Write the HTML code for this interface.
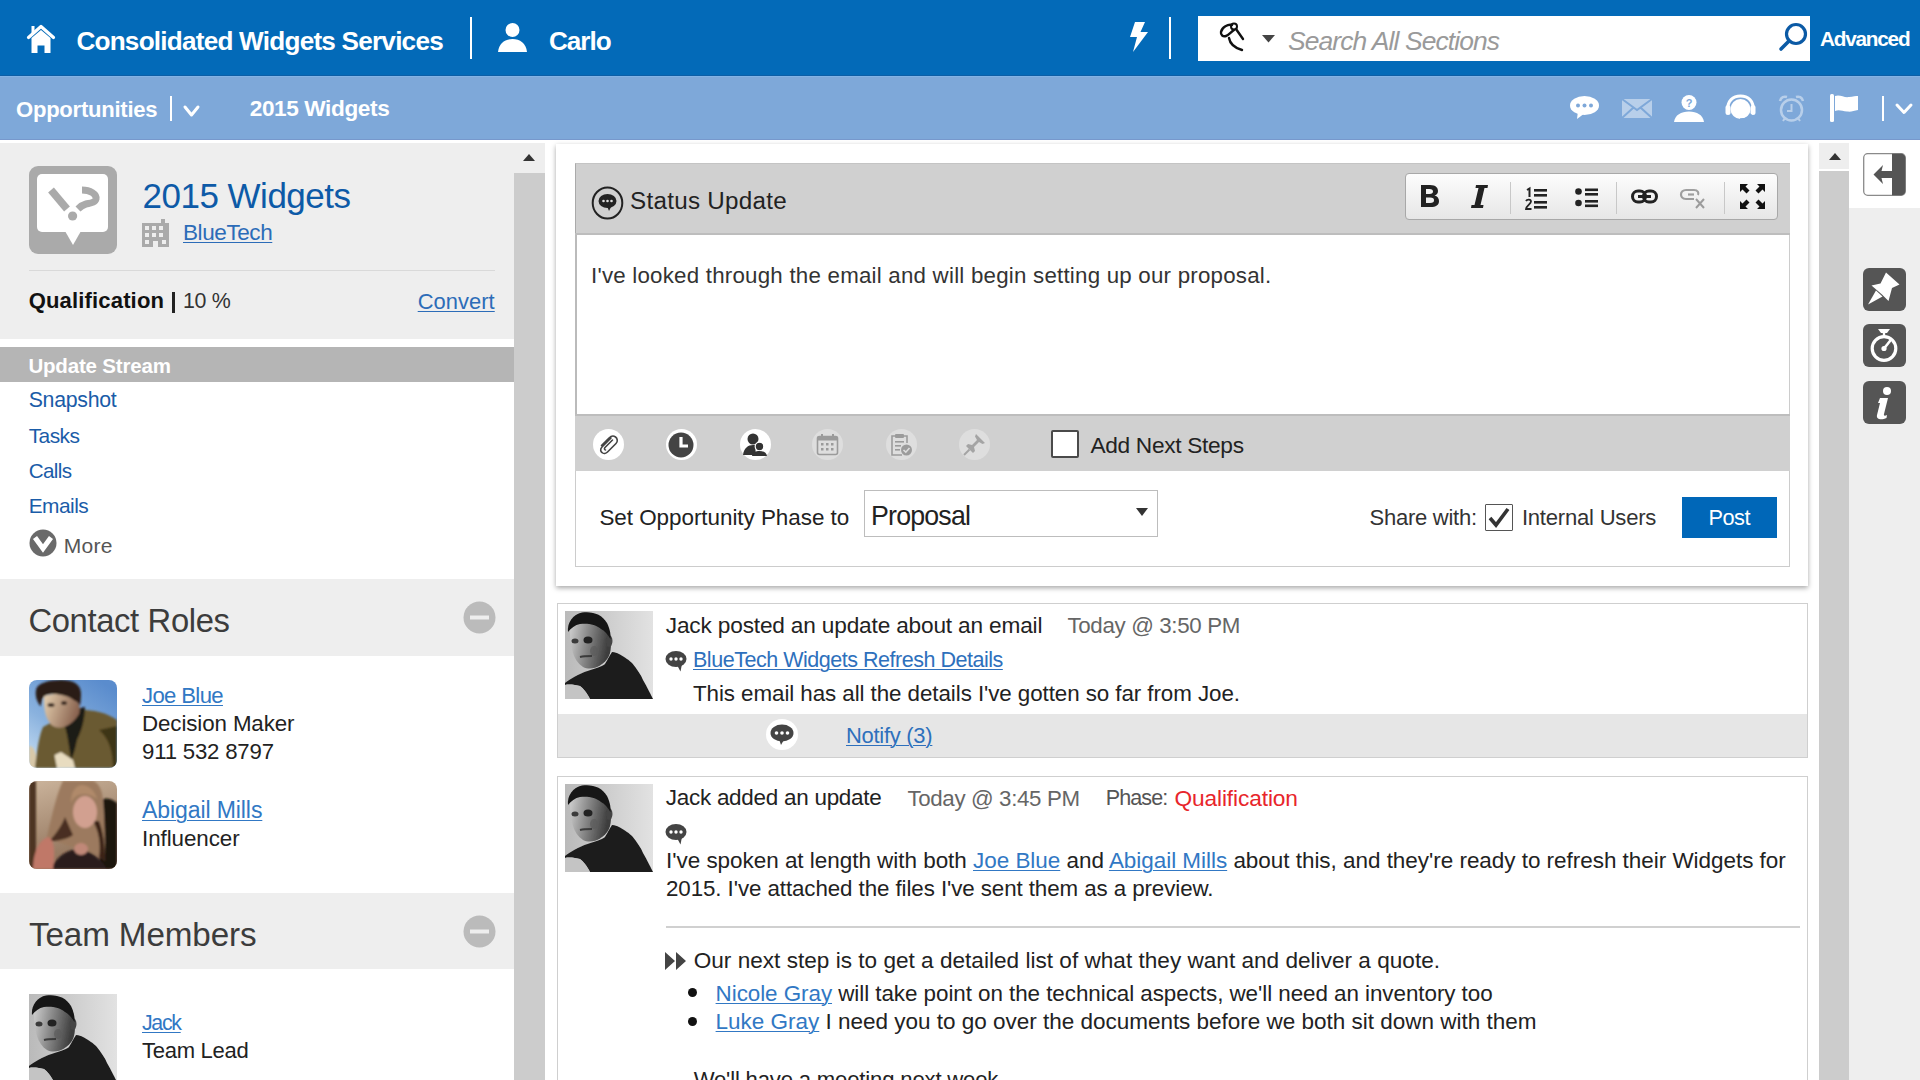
<!DOCTYPE html>
<html><head><meta charset="utf-8">
<style>
*{box-sizing:border-box}
html,body{margin:0;padding:0}
body{width:1920px;height:1080px;overflow:hidden;position:relative;font-family:"Liberation Sans",sans-serif;background:#fff;color:#222}
.a{position:absolute}
svg.a{overflow:visible}
.t{position:absolute;line-height:1;white-space:nowrap}
.lk{text-decoration:underline;text-decoration-thickness:1px;text-underline-offset:2px}
.circ{position:absolute;width:31px;height:31px;border-radius:50%}
</style></head><body>
<!-- ============ TOP HEADER ============ -->
<div class="a" style="left:0;top:0;width:1920px;height:76px;background:#036ab8"></div>
<div class="a" style="left:0;top:76px;width:1920px;height:64px;background:#7ea8d9"></div>
<div class="a" style="left:0;top:140px;width:1920px;height:3px;background:#fff"></div>
<div class="a" style="left:0;top:75px;width:1920px;height:1px;background:#0d5ea6"></div>
<div class="a" style="left:0;top:76px;width:1920px;height:1px;background:#82b3e6"></div>
<div class="a" style="left:0;top:139px;width:1920px;height:1px;background:#7798cc"></div>
<!-- home -->
<svg class="a" style="left:27px;top:24px" width="28" height="29" viewBox="0 0 28 29">
 <path d="M1.5 13.5 L14 2.5 L26.5 13.5" stroke="#fff" stroke-width="3.2" fill="none" stroke-linecap="round" stroke-linejoin="round"/>
 <path d="M4.5 14 L14 6 L23.5 14 V29 H17.5 V21.5 H10.5 V29 H4.5 Z" fill="#fff"/>
 <rect x="4.5" y="2" width="3" height="7" fill="#fff"/>
</svg>
<div class="a" style="left:470px;top:17px;width:2px;height:42px;background:#fff"></div>
<!-- person -->
<svg class="a" style="left:498px;top:23px" width="30" height="30" viewBox="0 0 30 30">
 <circle cx="14.5" cy="7" r="7" fill="#fff"/>
 <path d="M0 29 C1 20 7 16 14.5 16 C22 16 28 20 29 29 Z" fill="#fff"/>
</svg>
<!-- lightning -->
<svg class="a" style="left:1129px;top:22px" width="20" height="30" viewBox="0 0 20 30">
 <path d="M6 0 H16 L11.5 10 H19 L4 30 L8 15 H1 Z" fill="#fff"/>
</svg>
<div class="a" style="left:1169px;top:17px;width:2px;height:42px;background:#fff"></div>
<!-- search box -->
<div class="a" style="left:1198px;top:16px;width:612px;height:45px;background:#fff"></div>
<svg class="a" style="left:1219px;top:21px" width="30" height="30" viewBox="0 0 30 30">
 <path d="M13 4 C9 3 3 6 2 11 C1.5 14 4 16 7 15 C10 14 12 11 15 9" stroke="#111" stroke-width="2.4" fill="none" stroke-linecap="round"/>
 <circle cx="15" cy="5.5" r="3" stroke="#111" stroke-width="2" fill="none"/>
 <path d="M17 8 L24 18" stroke="#111" stroke-width="2.4" stroke-linecap="round"/>
 <path d="M10 17 C11 23 16 27 23 29" stroke="#111" stroke-width="2.4" fill="none" stroke-linecap="round"/>
</svg>
<svg class="a" style="left:1262px;top:35px" width="13" height="8" viewBox="0 0 13 8"><path d="M0 0 H13 L6.5 7.5 Z" fill="#444"/></svg>
<svg class="a" style="left:1778px;top:22px" width="30" height="30" viewBox="0 0 30 30">
 <circle cx="18" cy="12" r="9.5" stroke="#0b5aa5" stroke-width="3.2" fill="none"/>
 <path d="M11 19 L3 27" stroke="#0b5aa5" stroke-width="3.6" stroke-linecap="round"/>
</svg>
<!-- sub header -->
<div class="a" style="left:170px;top:96px;width:2px;height:25px;background:#fff"></div>
<svg class="a" style="left:183px;top:105px" width="17" height="13" viewBox="0 0 17 13"><path d="M2 2 L8.5 10 L15 2" stroke="#fff" stroke-width="3" fill="none" stroke-linecap="round" stroke-linejoin="round"/></svg>
<!-- chat -->
<svg class="a" style="left:1570px;top:96px" width="30" height="24" viewBox="0 0 30 24">
 <ellipse cx="14.5" cy="9.5" rx="14.5" ry="9.5" fill="#fff"/>
 <path d="M8 15 L7 23 L15 17 Z" fill="#fff"/>
 <circle cx="8" cy="9.5" r="2" fill="#7ea8d9"/><circle cx="14.5" cy="9.5" r="2" fill="#7ea8d9"/><circle cx="21" cy="9.5" r="2" fill="#7ea8d9"/>
</svg>
<!-- envelope faded -->
<svg class="a" style="left:1622px;top:99px" width="30" height="19" viewBox="0 0 30 19" opacity="0.45">
 <path d="M0 0 H30 V19 H0 Z" fill="#fff"/>
 <path d="M0 0 L15 11 L30 0 M0 19 L11 9 M30 19 L19 9" stroke="#7ea8d9" stroke-width="2" fill="none"/>
</svg>
<!-- person ? -->
<svg class="a" style="left:1674px;top:95px" width="30" height="28" viewBox="0 0 30 28">
 <circle cx="15" cy="7.5" r="7.5" fill="#fff"/>
 <text x="15" y="11.5" font-size="11" font-weight="bold" text-anchor="middle" fill="#7ea8d9" font-family="Liberation Sans">?</text>
 <path d="M0 27 C1 20 7 16.5 15 16.5 C23 16.5 29 20 30 27 Z" fill="#fff"/>
</svg>
<!-- headset -->
<svg class="a" style="left:1725px;top:94px" width="31" height="27" viewBox="0 0 31 27">
 <path d="M3 16 C2 7 8 2 15.5 2 C23 2 29 7 28 16" stroke="#fff" stroke-width="3" fill="none"/>
 <circle cx="15.5" cy="15" r="10" fill="#fff"/>
 <rect x="0.5" y="11" width="5" height="10" rx="2.5" fill="#fff"/>
 <rect x="25.5" y="11" width="5" height="10" rx="2.5" fill="#fff"/>
 <path d="M26 20 C25 24 20 25 15 25" stroke="#7ea8d9" stroke-width="1.5" fill="none"/>
</svg>
<!-- alarm faded -->
<svg class="a" style="left:1778px;top:95px" width="27" height="28" viewBox="0 0 27 28" opacity="0.45">
 <circle cx="13.5" cy="15" r="10.5" stroke="#fff" stroke-width="2.5" fill="none"/>
 <path d="M2 6 C3 2 6 1 9 2 M25 6 C24 2 21 1 18 2" stroke="#fff" stroke-width="2.5" fill="none"/>
 <path d="M13.5 9 V16 H9" stroke="#fff" stroke-width="2" fill="none"/>
 <path d="M5 26 L7 23 M22 26 L20 23" stroke="#fff" stroke-width="2"/>
</svg>
<!-- flag -->
<svg class="a" style="left:1830px;top:94px" width="29" height="29" viewBox="0 0 29 29">
 <rect x="0" y="0" width="4" height="28" rx="1.5" fill="#fff"/>
 <path d="M5 2 C10 0 14 4 19 3 C23 2.5 26 2 28 2 V16 C24 17 21 18 17 17.5 C12 17 9 15 5 17 Z" fill="#fff"/>
</svg>
<div class="a" style="left:1882px;top:96px;width:2px;height:25px;background:#fff"></div>
<svg class="a" style="left:1895px;top:103px" width="18" height="12" viewBox="0 0 18 12"><path d="M2 2 L9 9.5 L16 2" stroke="#fff" stroke-width="3" fill="none" stroke-linecap="round" stroke-linejoin="round"/></svg>

<!-- ============ LEFT PANEL ============ -->
<div class="a" style="left:0;top:143px;width:514px;height:196px;background:#eee"></div>
<div class="a" style="left:0;top:347px;width:514px;height:35px;background:#b5b5b5"></div>
<div class="a" style="left:0;top:579px;width:514px;height:77px;background:#eee"></div>
<div class="a" style="left:0;top:893px;width:514px;height:76px;background:#eee"></div>
<!-- big icon -->
<svg class="a" style="left:29px;top:166px" width="88" height="88" viewBox="0 0 88 88">
 <rect x="0" y="0" width="88" height="88" rx="9" fill="#aaa"/>
 <rect x="8" y="8" width="71" height="58" rx="5" fill="#fff"/>
 <path d="M36 65 L44 79 L52 65 Z" fill="#fff"/>
 <path d="M22 24 L38 43" stroke="#aaa" stroke-width="7.5" stroke-linecap="butt"/>
 <circle cx="43.6" cy="50" r="4.6" fill="#aaa"/>
 <path d="M53 24 C61 24 68 28 67 33 C66 37 61 37 57 38 C53 39 51 41 49 43" stroke="#aaa" stroke-width="7" fill="none"/>
</svg>
<!-- building -->
<svg class="a" style="left:142px;top:219px" width="28" height="28" viewBox="0 0 28 28">
 <path d="M0 4 H19 V0 H23 V4 H27 V28 H16 V22 H11 V28 H0 Z" fill="#aaa"/>
 <g fill="#eee">
 <rect x="3" y="7" width="4" height="4"/><rect x="10" y="7" width="4" height="4"/><rect x="17" y="7" width="4" height="4"/>
 <rect x="3" y="14" width="4" height="4"/><rect x="10" y="14" width="4" height="4"/><rect x="17" y="14" width="4" height="4"/>
 <rect x="3" y="21" width="4" height="4"/><rect x="20" y="21" width="4" height="4"/>
 </g>
</svg>
<div class="a" style="left:29px;top:270px;width:466px;height:1px;background:#d9d9d9"></div>
<div class="a" style="left:172px;top:292px;width:2.5px;height:21px;background:#222"></div>
<!-- more circle -->
<svg class="a" style="left:29px;top:529px" width="28" height="28" viewBox="0 0 28 28">
 <circle cx="14" cy="14" r="13.5" fill="#6a6a6a"/>
 <path d="M6 8.5 L14 19.5 L22 8.5" stroke="#fff" stroke-width="5" fill="none" stroke-linejoin="miter"/>
</svg>
<!-- minus circles -->
<svg class="a" style="left:463px;top:601px" width="33" height="33" viewBox="0 0 33 33"><circle cx="16.5" cy="16.5" r="16" fill="#bbb"/><rect x="7" y="14.5" width="19" height="4" fill="#eee"/></svg>
<svg class="a" style="left:463px;top:915px" width="33" height="33" viewBox="0 0 33 33"><circle cx="16.5" cy="16.5" r="16" fill="#bbb"/><rect x="7" y="14.5" width="19" height="4" fill="#eee"/></svg>
<!-- photos -->
<svg class="a" style="left:29px;top:680px" width="88" height="88" viewBox="0 0 88 88">
 <defs><clipPath id="cj"><rect width="88" height="88" rx="8"/></clipPath>
 <linearGradient id="sky" x1="0.8" y1="0" x2="0.1" y2="1"><stop offset="0" stop-color="#5a8ccd"/><stop offset="0.6" stop-color="#8ab2de"/><stop offset="1" stop-color="#c4dcf2"/></linearGradient>
 <linearGradient id="jfc" x1="0" y1="0" x2="1" y2="0.3"><stop offset="0" stop-color="#e6d0b0"/><stop offset="1" stop-color="#8a6450"/></linearGradient>
 <filter id="bj"><feGaussianBlur stdDeviation="0.8"/></filter></defs>
 <g clip-path="url(#cj)">
 <rect width="88" height="88" fill="url(#sky)"/>
 <g filter="url(#bj)">
 <path d="M0 66 C4 66 8 70 8 88 H0 Z" fill="#d8c8a8"/>
 <path d="M6 88 C8 70 10 56 14 47 C26 40 40 33 52 30 C64 30 76 32 88 40 V88 Z" fill="#6a5a30"/>
 <path d="M70 50 C80 58 84 72 84 88 H88 V46 Z" fill="#3e3418"/>
 <path d="M36 32 C44 30 50 28 56 27 C56 40 52 52 48 60 C46 70 44 76 42 80 C40 66 38 50 34 42 Z" fill="#1e1a14"/>
 <path d="M15 16 C14 30 18 44 26 47 C34 50 44 44 50 34 C52 28 50 22 46 20 C38 14 26 12 15 16 Z" fill="url(#jfc)"/>
 <path d="M7 10 C8 3 20 0 32 0 C44 0 52 4 52 14 C52 20 51 24 51 26 C49 22 47 21 46 21 C40 16 32 14 24 14 C18 14 14 16 13 20 C12 24 12 26 11.6 26 C8 22 6 16 7 10 Z" fill="#2a1c14"/>
 <ellipse cx="22" cy="25" rx="3.5" ry="2" fill="#3a2a20"/><ellipse cx="35" cy="23" rx="3" ry="2" fill="#3a2a20"/>
 <path d="M25.5 75 L32 72 L44 80 L46 88 H28 Z" fill="#e8dcc0"/>
 </g></g>
</svg>
<svg class="a" style="left:29px;top:781px" width="88" height="88" viewBox="0 0 88 88">
 <defs><clipPath id="ca"><rect width="88" height="88" rx="8"/></clipPath>
 <linearGradient id="wall" x1="0" y1="0" x2="0.3" y2="1"><stop offset="0" stop-color="#cbb49c"/><stop offset="1" stop-color="#8e7058"/></linearGradient>
 <filter id="ba"><feGaussianBlur stdDeviation="0.9"/></filter></defs>
 <g clip-path="url(#ca)">
 <rect width="88" height="88" fill="url(#wall)"/>
 <g filter="url(#ba)">
 <rect x="0" y="0" width="7" height="88" fill="#4e3424"/>
 <path d="M74 18 C80 16 86 20 88 22 V88 H68 C74 70 76 50 74 18 Z" fill="#1e130e"/>
 <path d="M34 0 C28 12 24 30 18 56 C28 62 40 64 50 68 C62 70 70 74 76 80 C76 60 76 40 74 22 C74 10 70 2 64 0 Z" fill="#9c7a5e"/>
 <path d="M36 36 C32 46 26 54 20 60 C30 60 38 58 44 54 Z" fill="#4a2e20"/>
 <path d="M64 40 C70 50 72 64 70 76 L76 80 C76 64 74 50 70 40 Z" fill="#3a2418"/>
 <ellipse cx="56" cy="31" rx="12" ry="16" fill="#d2a090"/>
 <path d="M42 22 C46 12 58 10 68 18 C66 10 60 4 52 4 C44 6 42 14 42 22 Z" fill="#b08a6a"/>
 <path d="M22 88 C28 74 40 68 50 68 C62 70 72 78 78 88 Z" fill="#2a1c1c"/>
 <ellipse cx="52" cy="68" rx="7" ry="6" fill="#c08878"/>
 <path d="M4 88 C4 72 10 58 20 56 C26 60 26 74 24 88 Z" fill="#c07868"/>
 </g></g>
</svg>
<svg class="a" style="left:29px;top:994px" width="88" height="88" viewBox="0 0 88 88">
 <defs><linearGradient id="jbt" x1="0" y1="0" x2="1" y2="0"><stop offset="0" stop-color="#bababa"/><stop offset="1" stop-color="#e2e2e2"/></linearGradient>
 <linearGradient id="jft" x1="0" y1="0" x2="1" y2="0.2"><stop offset="0" stop-color="#d0d0d0"/><stop offset="0.45" stop-color="#8c8c8c"/><stop offset="1" stop-color="#3c3c3c"/></linearGradient>
 <filter id="jblt"><feGaussianBlur stdDeviation="0.6"/></filter></defs>
 <rect width="88" height="88" fill="url(#jbt)"/>
 <g filter="url(#jblt)">
 <path d="M5 19 C5 35 8 50 18 56 C26 60 38 56 44 45 C47 38 46 28 44 22 C40 14 30 10 20 11 C12 12 6 15 5 19 Z" fill="url(#jft)"/>
 <ellipse cx="44" cy="30" rx="3.5" ry="6" fill="#444"/>
 <path d="M3 21 C2 12 8 3 17 1.5 C27 0 37 3 42 12 C45 18 46 24 45.5 28 C43 24 40 20 36 18 C31 13 22 12 15 13 C10 14 6 17 3 21 Z" fill="#141414"/>
 <ellipse cx="10" cy="30" rx="3.5" ry="2.5" fill="#3a3a3a"/><ellipse cx="23" cy="29" rx="4.5" ry="3.5" fill="#222"/><ellipse cx="29" cy="40" rx="4" ry="5" fill="#5a5a5a" opacity="0.6"/>
 <path d="M15 46 C19 45 23 45 27 45" stroke="#3a3a3a" stroke-width="2" fill="none"/>
 <path d="M0 72 C8 66 18 61 25.5 59 C32 57 38 55 40 53 C43 48 45 44 47 41 C50 41 52 42 54 43 C60 46 65 50 67 52 C72 58 76 64 78 69 C82 76 85 82 88 88 H25 C22 82 18 77 15 75 C10 74 4 73 0 74 Z" fill="#1c1c1c"/>
 <path d="M0 74 C5 73 11 74 15 75 C18 77 22 82 25 88 H0 Z" fill="#c4c4c4"/>
 </g>
</svg>
<!-- left scrollbar -->
<div class="a" style="left:514px;top:143px;width:31px;height:30px;background:#eee"></div>
<div class="a" style="left:514px;top:173px;width:31px;height:907px;background:#ccc"></div>
<svg class="a" style="left:523px;top:154px" width="12" height="7" viewBox="0 0 12 7"><path d="M0 7 L6 0 L12 7 Z" fill="#333"/></svg>

<!-- ============ MAIN ============ -->
<!-- status card -->
<div class="a" style="left:556px;top:144px;width:1252px;height:442px;background:#fff;box-shadow:0 2px 5px rgba(0,0,0,0.35)"></div>
<div class="a" style="left:575px;top:163px;width:1215px;height:71px;background:#d0d0d0;border-left:1px solid #aaa;border-top:1px solid #c4c4c4"></div>
<div class="a" style="left:575px;top:233px;width:1215px;height:2px;background:#bdbdbd"></div>
<div class="a" style="left:575px;top:235px;width:1215px;height:180px;background:#fff;border-left:2px solid #bbb;border-right:1px solid #ccc"></div>
<div class="a" style="left:575px;top:414px;width:1215px;height:57px;background:#d0d0d0;border-top:2px solid #bdbdbd"></div>
<div class="a" style="left:575px;top:471px;width:1215px;height:96px;background:#fff;border:1px solid #ccc;border-top:none"></div>
<!-- status icon -->
<svg class="a" style="left:591px;top:186px" width="33" height="34" viewBox="0 0 33 34">
 <ellipse cx="16.5" cy="17" rx="14.8" ry="15.5" stroke="#222" stroke-width="2" fill="none"/>
 <ellipse cx="16.5" cy="15" rx="9" ry="7" fill="#222"/>
 <path d="M16 20 L18 25 L21 19 Z" fill="#222"/>
 <circle cx="12.5" cy="15" r="1.3" fill="#ddd"/><circle cx="16.5" cy="15" r="1.3" fill="#ddd"/><circle cx="20.5" cy="15" r="1.3" fill="#ddd"/>
</svg>
<!-- editor toolbar -->
<div class="a" style="left:1405px;top:173px;width:373px;height:47px;border:1px solid #a8a8a8;border-radius:4px;background:linear-gradient(#fdfdfd,#e6e6e6)"></div>
<div class="a" style="left:1510px;top:182px;width:1px;height:32px;background:#c8c8c8"></div>
<div class="a" style="left:1616px;top:182px;width:1px;height:32px;background:#c8c8c8"></div>
<div class="a" style="left:1724px;top:182px;width:1px;height:32px;background:#c8c8c8"></div>
<svg class="a" style="left:1420px;top:184px" width="20" height="24" viewBox="0 0 20 24">
 <path d="M1 1 H10 C16 1 18 4 18 7 C18 9.5 16.5 11 14.5 11.5 C17.5 12 19 14.5 19 17 C19 21 16 23 10.5 23 H1 Z M6 5 V10 H9.5 C12 10 13 9 13 7.5 C13 6 12 5 9.5 5 Z M6 13.5 V19 H10 C13 19 14 18 14 16.2 C14 14.5 13 13.5 10 13.5 Z" fill="#222" fill-rule="evenodd"/>
</svg>
<svg class="a" style="left:1471px;top:185px" width="17" height="23" viewBox="0 0 17 23">
 <path d="M5 0 H17 L16.5 3 H13.5 L9.5 20 H12.5 L12 23 H0 L0.5 20 H3.5 L7.5 3 H4.5 Z" fill="#222"/>
</svg>
<svg class="a" style="left:1525px;top:187px" width="23" height="24" viewBox="0 0 23 24">
 <path d="M2 3 L4.5 1.5 V10" stroke="#222" stroke-width="2" fill="none"/>
 <path d="M1 14 C2 12 6 12 6 14.5 C6 17 1 19 1 22 H6.5" stroke="#222" stroke-width="1.8" fill="none"/>
 <rect x="9" y="2" width="13" height="2.6" fill="#222"/><rect x="9" y="7" width="13" height="2.6" fill="#222"/>
 <rect x="9" y="14" width="13" height="2.6" fill="#222"/><rect x="9" y="19" width="13" height="2.6" fill="#222"/>
</svg>
<svg class="a" style="left:1575px;top:187px" width="24" height="22" viewBox="0 0 24 22">
 <circle cx="3.5" cy="4.5" r="3.3" fill="#222"/><circle cx="3.5" cy="16" r="3.3" fill="#222"/>
 <rect x="10" y="1.5" width="13" height="2.6" fill="#222"/><rect x="10" y="6" width="13" height="2.6" fill="#222"/>
 <rect x="10" y="13" width="13" height="2.6" fill="#222"/><rect x="10" y="17.5" width="13" height="2.6" fill="#222"/>
</svg>
<svg class="a" style="left:1631px;top:189px" width="27" height="15" viewBox="0 0 27 15">
 <rect x="1.5" y="2" width="13" height="11" rx="5.5" stroke="#222" stroke-width="3" fill="none"/>
 <rect x="12.5" y="2" width="13" height="11" rx="5.5" stroke="#222" stroke-width="3" fill="none"/>
 <rect x="7" y="6" width="13" height="3" fill="#222"/>
</svg>
<svg class="a" style="left:1680px;top:187px" width="28" height="22" viewBox="0 0 28 22" opacity="0.4">
 <path d="M14 12 H6 C2 12 1 9 1 7.5 C1 5 3 3 6 3 H14 C18 3 19 6 18 8" stroke="#222" stroke-width="2.2" fill="none"/>
 <path d="M8 7.5 H14" stroke="#222" stroke-width="2.2"/>
 <path d="M16 12 L24 21 M24 12 L16 21" stroke="#222" stroke-width="2"/>
</svg>
<svg class="a" style="left:1739px;top:183px" width="27" height="27" viewBox="0 0 27 27">
 <path d="M1 1 H9 L6.5 3.5 L10.5 7.5 L7.5 10.5 L3.5 6.5 L1 9 Z" fill="#111"/>
 <path d="M26 1 H18 L20.5 3.5 L16.5 7.5 L19.5 10.5 L23.5 6.5 L26 9 Z" fill="#111"/>
 <path d="M1 26 H9 L6.5 23.5 L10.5 19.5 L7.5 16.5 L3.5 20.5 L1 18 Z" fill="#111"/>
 <path d="M26 26 H18 L20.5 23.5 L16.5 19.5 L19.5 16.5 L23.5 20.5 L26 18 Z" fill="#111"/>
</svg>
<!-- bottom tools -->
<div class="circ" style="left:593px;top:429px;background:#fff"></div>
<div class="circ" style="left:665.5px;top:429px;background:#fff"></div>
<div class="circ" style="left:739.5px;top:429px;background:#fff"></div>
<div class="circ" style="left:812px;top:429px;background:#dedede"></div>
<div class="circ" style="left:885.5px;top:429px;background:#dedede"></div>
<div class="circ" style="left:959px;top:429px;background:#dedede"></div>
<svg class="a" style="left:597px;top:433px" width="23" height="23" viewBox="0 0 23 23">
 <path d="M14 5 L5 14 C3 16 3.5 18.5 5 19.5 C6.5 21 9 20.5 10.5 19 L19 10.5 C21 8.5 20.5 5.5 18.5 4 C16.5 2.5 14 3 12 5 L4.5 12.5" stroke="#444" stroke-width="1.6" fill="none" stroke-linecap="round"/>
 <path d="M15.5 7 L8 14.5 C7 15.5 7.5 17 8.5 17" stroke="#444" stroke-width="1.6" fill="none" stroke-linecap="round"/>
</svg>
<svg class="a" style="left:668px;top:432px" width="26" height="26" viewBox="0 0 26 26">
 <circle cx="13" cy="13" r="12.5" fill="#444"/>
 <path d="M13 5 V14 H20" stroke="#fff" stroke-width="3.2" fill="none"/>
</svg>
<svg class="a" style="left:743px;top:433px" width="24" height="23" viewBox="0 0 24 23">
 <circle cx="10" cy="6" r="5.5" fill="#333"/>
 <path d="M0 22 C1 15 5 12 10 12 C12 12 13 12.5 14 13 C12 15 12 19 14 22 Z" fill="#333"/>
 <circle cx="16.5" cy="13.5" r="4.3" fill="#333" stroke="#fff" stroke-width="1.2"/>
 <path d="M9 23 C9.5 19.5 12.5 18 16.5 18 C20.5 18 23.5 19.5 24 23 Z" fill="#333"/>
</svg>
<svg class="a" style="left:816px;top:433px" width="23" height="23" viewBox="0 0 23 23" opacity="0.35">
 <rect x="1.5" y="3.5" width="20" height="18" rx="2" stroke="#222" stroke-width="1.6" fill="none"/>
 <rect x="1.5" y="3.5" width="20" height="4" fill="#222"/>
 <rect x="5" y="1" width="2" height="4" fill="#222"/><rect x="16" y="1" width="2" height="4" fill="#222"/>
 <g fill="#222"><rect x="5" y="10" width="2.5" height="2.5"/><rect x="10" y="10" width="2.5" height="2.5"/><rect x="15" y="10" width="2.5" height="2.5"/><rect x="5" y="15" width="2.5" height="2.5"/><rect x="10" y="15" width="2.5" height="2.5"/><rect x="15" y="15" width="2.5" height="2.5"/></g>
</svg>
<svg class="a" style="left:890px;top:433px" width="23" height="24" viewBox="0 0 23 24" opacity="0.35">
 <path d="M5 3 H2 V22 H12" stroke="#222" stroke-width="1.6" fill="none"/>
 <path d="M14 3 H17 V10" stroke="#222" stroke-width="1.6" fill="none"/>
 <rect x="5" y="1" width="9" height="4" rx="1" fill="#222"/>
 <g fill="#222"><rect x="5" y="8" width="9" height="1.6"/><rect x="5" y="12" width="6" height="1.6"/><rect x="5" y="16" width="5" height="1.6"/></g>
 <circle cx="16.5" cy="17" r="5.5" fill="#222"/>
 <path d="M13.5 17 L15.8 19.2 L19.5 15" stroke="#ddd" stroke-width="1.6" fill="none"/>
</svg>
<svg class="a" style="left:963px;top:433px" width="23" height="23" viewBox="0 0 23 23" opacity="0.3">
 <path d="M13 1 L22 10 L19.5 11 L16 9 L11 14 L12 18 L10 20 L3 13 L5 11 L9 12 L14 7 L12 3.5 Z" fill="#222"/>
 <path d="M6.5 16.5 L1 22" stroke="#222" stroke-width="2"/>
</svg>
<div class="a" style="left:1051px;top:430px;width:28px;height:28px;background:#fff;border:2px solid #4a4a4a;border-radius:2px"></div>
<!-- phase select -->
<div class="a" style="left:864px;top:490px;width:294px;height:47px;background:#fff;border:1px solid #bdbdbd"></div>
<svg class="a" style="left:1136px;top:508px" width="12" height="8" viewBox="0 0 12 8"><path d="M0 0 H12 L6 8 Z" fill="#333"/></svg>
<div class="a" style="left:1485px;top:504px;width:28px;height:27px;background:#fff;border:1.5px solid #555;border-radius:1px"></div>
<svg class="a" style="left:1487px;top:506px" width="24" height="23" viewBox="0 0 24 23"><path d="M3 12 L9 19 L21 3" stroke="#333" stroke-width="3.6" fill="none"/></svg>
<div class="a" style="left:1682px;top:497px;width:95px;height:41px;background:#0067b8"></div>

<!-- feed item 1 -->
<div class="a" style="left:557px;top:603px;width:1251px;height:155px;background:#fff;border:1px solid #cfcfcf"></div>
<div class="a" style="left:558px;top:714px;width:1249px;height:43px;background:#e6e6e6"></div>
<svg class="a" style="left:565px;top:611px" width="88" height="88" viewBox="0 0 88 88">
 <defs><linearGradient id="jb611" x1="0" y1="0" x2="1" y2="0"><stop offset="0" stop-color="#bababa"/><stop offset="1" stop-color="#e2e2e2"/></linearGradient>
 <linearGradient id="jf611" x1="0" y1="0" x2="1" y2="0.2"><stop offset="0" stop-color="#d0d0d0"/><stop offset="0.45" stop-color="#8c8c8c"/><stop offset="1" stop-color="#3c3c3c"/></linearGradient>
 <filter id="jbl611"><feGaussianBlur stdDeviation="0.6"/></filter></defs>
 <rect width="88" height="88" fill="url(#jb611)"/>
 <g filter="url(#jbl611)">
 <path d="M5 19 C5 35 8 50 18 56 C26 60 38 56 44 45 C47 38 46 28 44 22 C40 14 30 10 20 11 C12 12 6 15 5 19 Z" fill="url(#jf611)"/>
 <ellipse cx="44" cy="30" rx="3.5" ry="6" fill="#444"/>
 <path d="M3 21 C2 12 8 3 17 1.5 C27 0 37 3 42 12 C45 18 46 24 45.5 28 C43 24 40 20 36 18 C31 13 22 12 15 13 C10 14 6 17 3 21 Z" fill="#141414"/>
 <ellipse cx="10" cy="30" rx="3.5" ry="2.5" fill="#3a3a3a"/><ellipse cx="23" cy="29" rx="4.5" ry="3.5" fill="#222"/><ellipse cx="29" cy="40" rx="4" ry="5" fill="#5a5a5a" opacity="0.6"/>
 <path d="M15 46 C19 45 23 45 27 45" stroke="#3a3a3a" stroke-width="2" fill="none"/>
 <path d="M0 72 C8 66 18 61 25.5 59 C32 57 38 55 40 53 C43 48 45 44 47 41 C50 41 52 42 54 43 C60 46 65 50 67 52 C72 58 76 64 78 69 C82 76 85 82 88 88 H25 C22 82 18 77 15 75 C10 74 4 73 0 74 Z" fill="#1c1c1c"/>
 <path d="M0 74 C5 73 11 74 15 75 C18 77 22 82 25 88 H0 Z" fill="#c4c4c4"/>
 </g>
</svg>
<svg class="a" style="left:665px;top:651px" width="22" height="20" viewBox="0 0 22 20">
 <ellipse cx="11" cy="8" rx="10.5" ry="8" fill="#444"/>
 <path d="M12 14 L15.5 20.5 L17 13 Z" fill="#444"/>
 <circle cx="6" cy="8" r="1.7" fill="#fff"/><circle cx="11" cy="8" r="1.7" fill="#fff"/><circle cx="16" cy="8" r="1.7" fill="#fff"/>
</svg>
<div class="a" style="left:766px;top:719px;width:32px;height:31px;border-radius:50%;background:#fff"></div>
<svg class="a" style="left:770px;top:724px" width="24" height="21" viewBox="0 0 24 21">
 <ellipse cx="12" cy="9" rx="11.5" ry="8.5" fill="#444"/>
 <path d="M9 15 L11 21 L15 14 Z" fill="#444"/>
 <circle cx="6.5" cy="9" r="1.8" fill="#fff"/><circle cx="12" cy="9" r="1.8" fill="#fff"/><circle cx="17.5" cy="9" r="1.8" fill="#fff"/>
</svg>

<!-- feed item 2 -->
<div class="a" style="left:557px;top:776px;width:1251px;height:320px;background:#fff;border:1px solid #cfcfcf"></div>
<svg class="a" style="left:565px;top:784px" width="88" height="88" viewBox="0 0 88 88">
 <defs><linearGradient id="jb784" x1="0" y1="0" x2="1" y2="0"><stop offset="0" stop-color="#bababa"/><stop offset="1" stop-color="#e2e2e2"/></linearGradient>
 <linearGradient id="jf784" x1="0" y1="0" x2="1" y2="0.2"><stop offset="0" stop-color="#d0d0d0"/><stop offset="0.45" stop-color="#8c8c8c"/><stop offset="1" stop-color="#3c3c3c"/></linearGradient>
 <filter id="jbl784"><feGaussianBlur stdDeviation="0.6"/></filter></defs>
 <rect width="88" height="88" fill="url(#jb784)"/>
 <g filter="url(#jbl784)">
 <path d="M5 19 C5 35 8 50 18 56 C26 60 38 56 44 45 C47 38 46 28 44 22 C40 14 30 10 20 11 C12 12 6 15 5 19 Z" fill="url(#jf784)"/>
 <ellipse cx="44" cy="30" rx="3.5" ry="6" fill="#444"/>
 <path d="M3 21 C2 12 8 3 17 1.5 C27 0 37 3 42 12 C45 18 46 24 45.5 28 C43 24 40 20 36 18 C31 13 22 12 15 13 C10 14 6 17 3 21 Z" fill="#141414"/>
 <ellipse cx="10" cy="30" rx="3.5" ry="2.5" fill="#3a3a3a"/><ellipse cx="23" cy="29" rx="4.5" ry="3.5" fill="#222"/><ellipse cx="29" cy="40" rx="4" ry="5" fill="#5a5a5a" opacity="0.6"/>
 <path d="M15 46 C19 45 23 45 27 45" stroke="#3a3a3a" stroke-width="2" fill="none"/>
 <path d="M0 72 C8 66 18 61 25.5 59 C32 57 38 55 40 53 C43 48 45 44 47 41 C50 41 52 42 54 43 C60 46 65 50 67 52 C72 58 76 64 78 69 C82 76 85 82 88 88 H25 C22 82 18 77 15 75 C10 74 4 73 0 74 Z" fill="#1c1c1c"/>
 <path d="M0 74 C5 73 11 74 15 75 C18 77 22 82 25 88 H0 Z" fill="#c4c4c4"/>
 </g>
</svg>
<svg class="a" style="left:665px;top:824px" width="22" height="20" viewBox="0 0 22 20">
 <ellipse cx="11" cy="8" rx="10.5" ry="8" fill="#444"/>
 <path d="M12 14 L15.5 20.5 L17 13 Z" fill="#444"/>
 <circle cx="6" cy="8" r="1.7" fill="#fff"/><circle cx="11" cy="8" r="1.7" fill="#fff"/><circle cx="16" cy="8" r="1.7" fill="#fff"/>
</svg>
<div class="a" style="left:666px;top:926px;width:1134px;height:2px;background:#d0d0d0"></div>
<svg class="a" style="left:665px;top:952px" width="22" height="18" viewBox="0 0 22 18">
 <path d="M0 0 L10 9 L0 18 Z M11 0 L21 9 L11 18 Z" fill="#444"/>
</svg>
<div class="a" style="left:688px;top:988px;width:9px;height:9px;border-radius:50%;background:#111"></div>
<div class="a" style="left:688px;top:1017px;width:9px;height:9px;border-radius:50%;background:#111"></div>

<!-- right scrollbar -->
<div class="a" style="left:1819px;top:143px;width:30px;height:26px;background:#eee"></div>
<div class="a" style="left:1819px;top:171px;width:30px;height:909px;background:#ccc"></div>
<svg class="a" style="left:1829px;top:153px" width="12" height="7" viewBox="0 0 12 7"><path d="M0 7 L6 0 L12 7 Z" fill="#333"/></svg>
<!-- right sidebar -->
<div class="a" style="left:1849px;top:143px;width:71px;height:937px;background:#eee"></div>
<div class="a" style="left:1849px;top:143px;width:71px;height:65px;background:#fff"></div>
<svg class="a" style="left:1863px;top:153px" width="43" height="43" viewBox="0 0 43 43">
 <rect x="0.7" y="0.7" width="41.6" height="41.6" rx="4" fill="#fff" stroke="#8a8a8a" stroke-width="1.3"/>
 <path d="M29 0.7 H38 C40.5 0.7 42.3 2.5 42.3 5 V38 C42.3 40.5 40.5 42.3 38 42.3 H29 Z" fill="#555"/>
 <path d="M10.5 21.5 L20 12 L18.5 18 H29 V25 H18.5 L20 31 Z" fill="#555"/>
</svg>
<svg class="a" style="left:1863px;top:268px" width="43" height="43" viewBox="0 0 43 43">
 <rect width="43" height="43" rx="6" fill="#555"/>
 <path d="M23 4.6 L36.5 16.4 L29 20 L25.5 33 L19 26.5 L8.5 17.5 L17.5 15.5 Z" fill="#fff"/>
 <path d="M13 22.5 L19.5 28.5 L5 36.5 Z" fill="#fff"/>
</svg>
<svg class="a" style="left:1863px;top:324px" width="43" height="43" viewBox="0 0 43 43">
 <rect width="43" height="43" rx="6" fill="#555"/>
 <circle cx="21" cy="24.5" r="11.8" stroke="#fff" stroke-width="3.2" fill="none"/>
 <path d="M15 5 H27 L24 9 H18 Z" fill="#fff"/>
 <rect x="19.8" y="8.5" width="2.4" height="4" fill="#fff"/>
 <circle cx="21" cy="24.5" r="2.6" fill="#fff"/>
 <path d="M21 24.5 L27 17" stroke="#fff" stroke-width="2.6" stroke-linecap="round"/>
</svg>
<svg class="a" style="left:1863px;top:381px" width="43" height="43" viewBox="0 0 43 43">
 <rect width="43" height="43" rx="6" fill="#555"/>
 <circle cx="24" cy="10" r="4" fill="#fff"/>
 <path d="M17 17 H25 L21 33 C20.5 35 22 35 24 34 L23.5 37 C19 39 13 39 14 34 L17 22 H15 Z" fill="#fff"/>
</svg>
<div class="t" style="left:76.4px;top:27.9px;font-size:26.15px;font-weight:bold;font-style:normal;color:#fff;letter-spacing:-0.778px;">Consolidated Widgets Services</div>
<div class="t" style="left:549.0px;top:27.9px;font-size:26.08px;font-weight:bold;font-style:normal;color:#fff;letter-spacing:-0.993px;">Carlo</div>
<div class="t" style="left:1288.0px;top:27.7px;font-size:26.45px;font-weight:normal;font-style:italic;color:#9a9a9a;letter-spacing:-0.904px;">Search All Sections</div>
<div class="t" style="left:1820.0px;top:29.1px;font-size:20.75px;font-weight:bold;font-style:normal;color:#fff;letter-spacing:-1.225px;">Advanced</div>
<div class="t" style="left:16.0px;top:98.7px;font-size:22.07px;font-weight:bold;font-style:normal;color:#fff;letter-spacing:-0.252px;">Opportunities</div>
<div class="t" style="left:249.7px;top:98.4px;font-size:22.61px;font-weight:bold;font-style:normal;color:#fff;letter-spacing:-0.383px;">2015 Widgets</div>
<div class="t" style="left:142.5px;top:177.5px;font-size:35.00px;font-weight:normal;font-style:normal;color:#0d5aa7;letter-spacing:-0.503px;">2015 Widgets</div>
<div class="t" style="left:183.0px;top:221.6px;font-size:22.54px;font-weight:normal;font-style:normal;color:#2c6cb8;letter-spacing:-0.427px;"><span class="lk" style="color:#2c6cb8">BlueTech</span></div>
<div class="t" style="left:28.7px;top:290.3px;font-size:22.07px;font-weight:bold;font-style:normal;color:#111;letter-spacing:0.140px;">Qualification</div>
<div class="t" style="left:183.0px;top:290.9px;font-size:21.39px;font-weight:normal;font-style:normal;color:#333;letter-spacing:-0.311px;">10 %</div>
<div class="t" style="left:417.7px;top:290.5px;font-size:21.90px;font-weight:normal;font-style:normal;color:#2c6cb8;letter-spacing:0.057px;"><span class="lk" style="color:#2c6cb8">Convert</span></div>
<div class="t" style="left:28.4px;top:356.0px;font-size:20.50px;font-weight:bold;font-style:normal;color:#fff;letter-spacing:-0.174px;">Update Stream</div>
<div class="t" style="left:28.7px;top:390.2px;font-size:21.31px;font-weight:normal;font-style:normal;color:#1a5ca8;letter-spacing:-0.286px;">Snapshot</div>
<div class="t" style="left:28.7px;top:426.0px;font-size:20.94px;font-weight:normal;font-style:normal;color:#1a5ca8;letter-spacing:-0.558px;">Tasks</div>
<div class="t" style="left:28.7px;top:461.2px;font-size:20.64px;font-weight:normal;font-style:normal;color:#1a5ca8;letter-spacing:-0.636px;">Calls</div>
<div class="t" style="left:28.7px;top:496.0px;font-size:20.90px;font-weight:normal;font-style:normal;color:#1a5ca8;letter-spacing:-0.537px;">Emails</div>
<div class="t" style="left:63.7px;top:534.9px;font-size:21.04px;font-weight:normal;font-style:normal;color:#555;letter-spacing:0.293px;">More</div>
<div class="t" style="left:28.4px;top:605.0px;font-size:32.77px;font-weight:normal;font-style:normal;color:#3c3c3c;letter-spacing:-0.350px;">Contact Roles</div>
<div class="t" style="left:142.0px;top:684.5px;font-size:22.12px;font-weight:normal;font-style:normal;color:#3a83d2;letter-spacing:-0.635px;"><span class="lk" style="color:#3178c4">Joe Blue</span></div>
<div class="t" style="left:142.0px;top:712.8px;font-size:22.34px;font-weight:normal;font-style:normal;color:#222;letter-spacing:-0.106px;">Decision Maker</div>
<div class="t" style="left:142.0px;top:740.9px;font-size:22.19px;font-weight:normal;font-style:normal;color:#222;letter-spacing:-0.190px;">911 532 8797</div>
<div class="t" style="left:142.0px;top:798.8px;font-size:23.04px;font-weight:normal;font-style:normal;color:#3a83d2;letter-spacing:-0.099px;"><span class="lk" style="color:#3178c4">Abigail Mills</span></div>
<div class="t" style="left:142.0px;top:827.7px;font-size:22.39px;font-weight:normal;font-style:normal;color:#222;letter-spacing:-0.063px;">Influencer</div>
<div class="t" style="left:29.0px;top:918.4px;font-size:33.23px;font-weight:normal;font-style:normal;color:#3c3c3c;letter-spacing:-0.119px;">Team Members</div>
<div class="t" style="left:142.0px;top:1012.6px;font-size:21.36px;font-weight:normal;font-style:normal;color:#3a83d2;letter-spacing:-1.307px;"><span class="lk" style="color:#3178c4">Jack</span></div>
<div class="t" style="left:142.0px;top:1040.0px;font-size:22.05px;font-weight:normal;font-style:normal;color:#222;letter-spacing:-0.299px;">Team Lead</div>
<div class="t" style="left:630.0px;top:189.0px;font-size:24.21px;font-weight:normal;font-style:normal;color:#222;letter-spacing:0.276px;">Status Update</div>
<div class="t" style="left:591.0px;top:264.6px;font-size:22.31px;font-weight:normal;font-style:normal;color:#333;letter-spacing:0.225px;">I've looked through the email and will begin setting up our proposal.</div>
<div class="t" style="left:1090.4px;top:433.9px;font-size:22.69px;font-weight:normal;font-style:normal;color:#222;letter-spacing:-0.311px;">Add Next Steps</div>
<div class="t" style="left:599.4px;top:507.3px;font-size:22.45px;font-weight:normal;font-style:normal;color:#222;letter-spacing:-0.039px;">Set Opportunity Phase to</div>
<div class="t" style="left:871.0px;top:503.0px;font-size:26.76px;font-weight:normal;font-style:normal;color:#222;letter-spacing:-0.811px;">Proposal</div>
<div class="t" style="left:1369.5px;top:507.0px;font-size:22.02px;font-weight:normal;font-style:normal;color:#333;letter-spacing:-0.264px;">Share with:</div>
<div class="t" style="left:1521.9px;top:506.9px;font-size:22.08px;font-weight:normal;font-style:normal;color:#333;letter-spacing:-0.226px;">Internal Users</div>
<div class="t" style="left:1708.5px;top:507.2px;font-size:21.76px;font-weight:normal;font-style:normal;color:#fff;letter-spacing:-0.510px;">Post</div>
<div class="t" style="left:665.8px;top:614.8px;font-size:22.63px;font-weight:normal;font-style:normal;color:#222;letter-spacing:-0.163px;">Jack posted an update about an email</div>
<div class="t" style="left:1067.5px;top:615.1px;font-size:22.33px;font-weight:normal;font-style:normal;color:#666;letter-spacing:-0.358px;">Today @ 3:50 PM</div>
<div class="t" style="left:693.0px;top:650.3px;font-size:21.53px;font-weight:normal;font-style:normal;color:#2e70bc;letter-spacing:-0.483px;"><span class="lk" style="color:#2e70bc">BlueTech Widgets Refresh Details</span></div>
<div class="t" style="left:693.0px;top:682.8px;font-size:22.37px;font-weight:normal;font-style:normal;color:#222;letter-spacing:-0.071px;">This email has all the details I've gotten so far from Joe.</div>
<div class="t" style="left:846.0px;top:724.6px;font-size:21.95px;font-weight:normal;font-style:normal;color:#2e70bc;letter-spacing:-0.265px;"><span class="lk" style="color:#2e70bc">Notify (3)</span></div>
<div class="t" style="left:665.8px;top:787.4px;font-size:22.46px;font-weight:normal;font-style:normal;color:#222;letter-spacing:-0.262px;">Jack added an update</div>
<div class="t" style="left:907.5px;top:787.5px;font-size:22.32px;font-weight:normal;font-style:normal;color:#666;letter-spacing:-0.371px;">Today @ 3:45 PM</div>
<div class="t" style="left:1105.8px;top:788.2px;font-size:21.51px;font-weight:normal;font-style:normal;color:#555;letter-spacing:-0.907px;">Phase:</div>
<div class="t" style="left:1174.4px;top:787.2px;font-size:22.72px;font-weight:normal;font-style:normal;color:#e8252b;letter-spacing:-0.119px;">Qualification</div>
<div class="t" style="left:666.0px;top:849.8px;font-size:22.48px;font-weight:normal;font-style:normal;color:#222;letter-spacing:-0.025px;">I've spoken at length with both <span class="lk" style="color:#3178c4">Joe Blue</span> and <span class="lk" style="color:#3178c4">Abigail Mills</span> about this, and they're ready to refresh their Widgets for</div>
<div class="t" style="left:666.0px;top:878.1px;font-size:22.34px;font-weight:normal;font-style:normal;color:#222;letter-spacing:-0.082px;">2015. I've attached the files I've sent them as a preview.</div>
<div class="t" style="left:693.7px;top:949.6px;font-size:22.57px;font-weight:normal;font-style:normal;color:#222;letter-spacing:0.017px;">Our next step is to get a detailed list of what they want and deliver a quote.</div>
<div class="t" style="left:715.6px;top:982.5px;font-size:22.41px;font-weight:normal;font-style:normal;color:#222;letter-spacing:-0.055px;"><span class="lk" style="color:#3178c4">Nicole Gray</span> will take point on the technical aspects, we'll need an inventory too</div>
<div class="t" style="left:715.6px;top:1011.3px;font-size:22.51px;font-weight:normal;font-style:normal;color:#222;letter-spacing:-0.012px;"><span class="lk" style="color:#3178c4">Luke Gray</span> I need you to go over the documents before we both sit down with them</div>
<div class="t" style="left:693.7px;top:1068.5px;font-size:22.14px;font-weight:normal;font-style:normal;color:#222;letter-spacing:-0.183px;">We'll have a meeting next week.</div>
</body></html>
